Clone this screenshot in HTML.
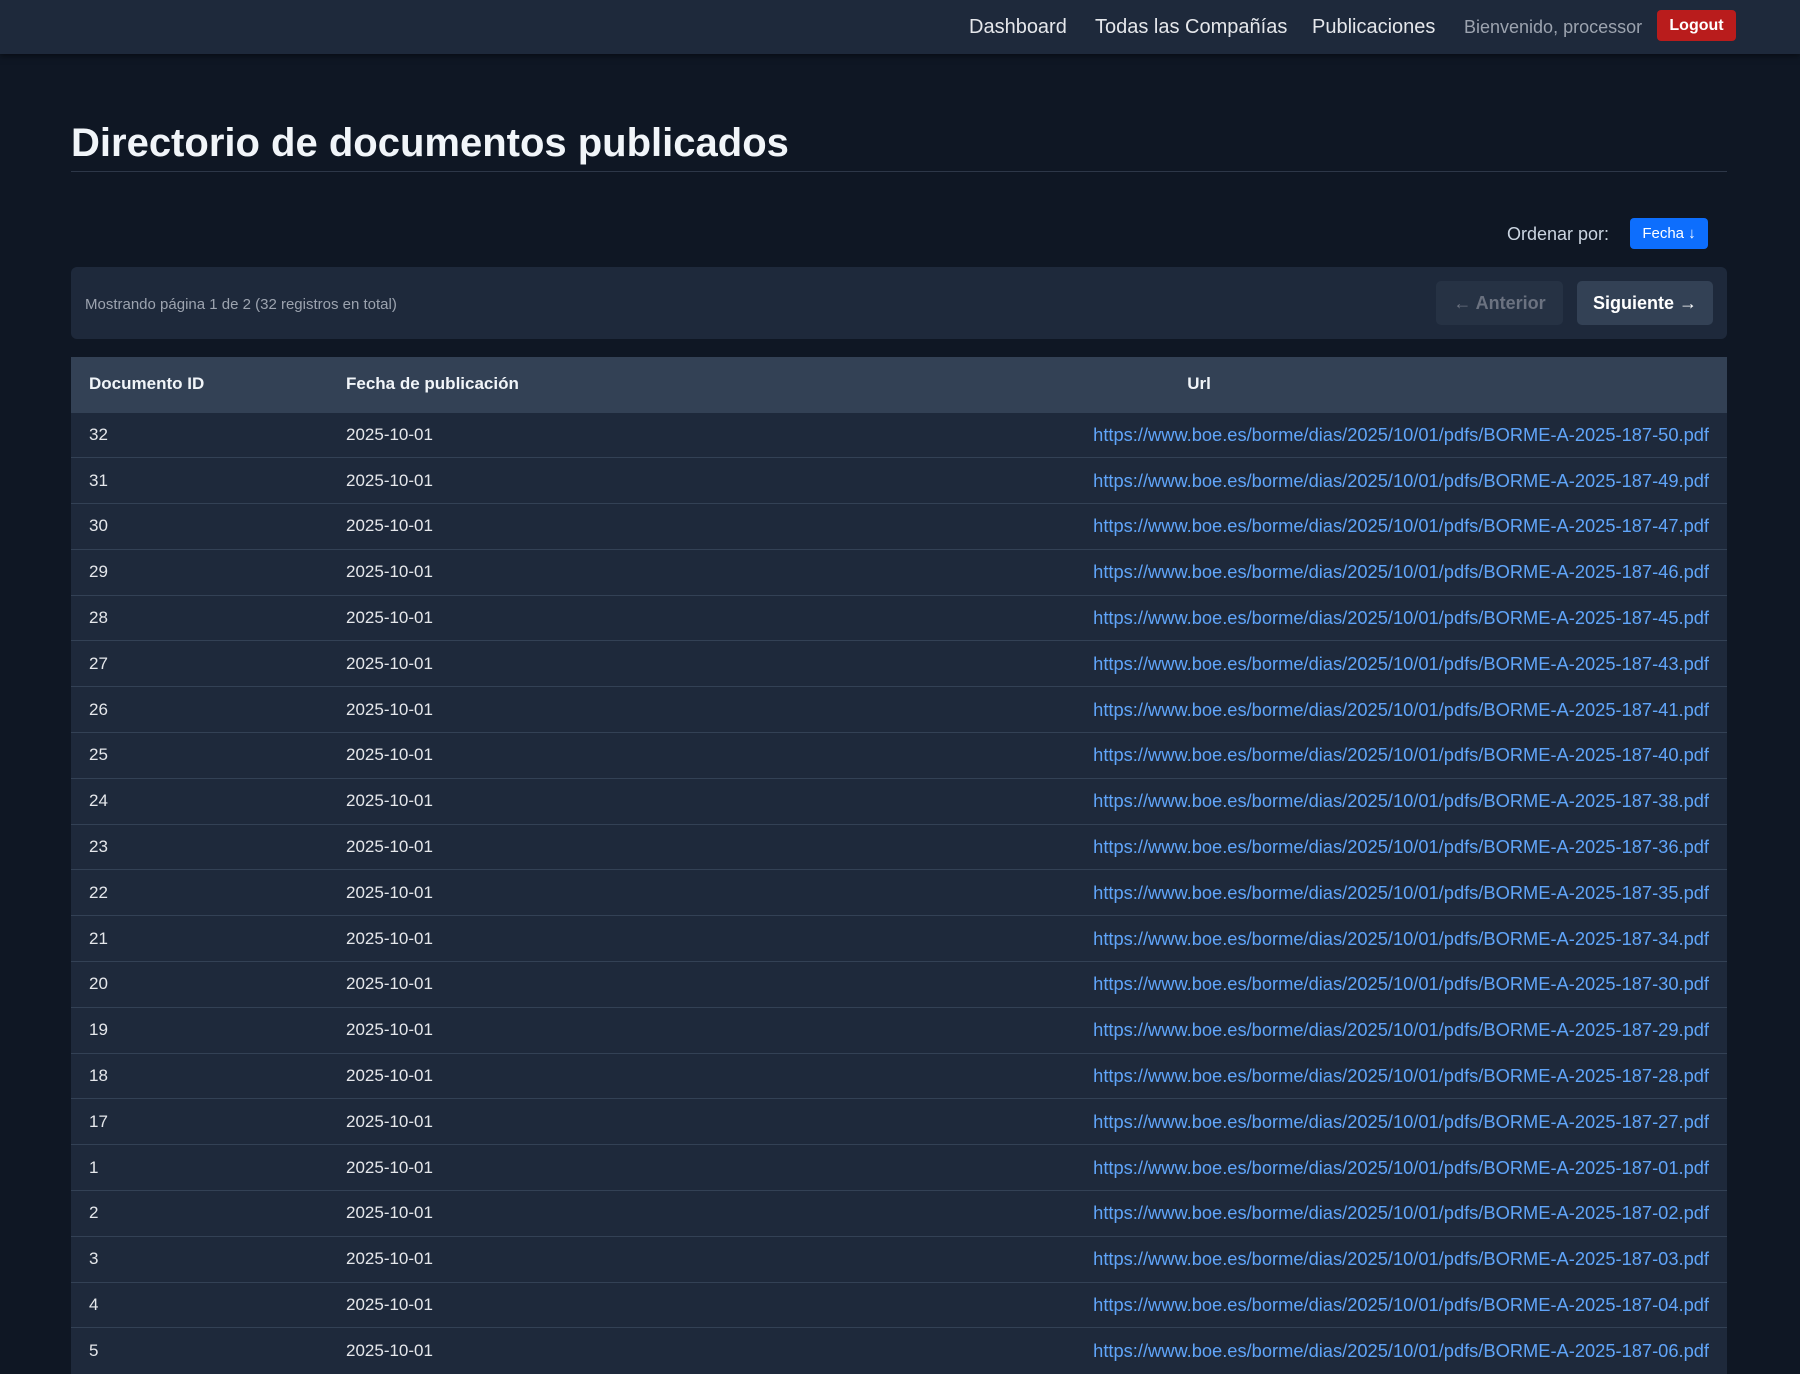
<!DOCTYPE html>
<html><head><meta charset="utf-8"><style>
*{box-sizing:border-box;margin:0;padding:0}
body{width:1800px;height:1350px;overflow:hidden;background:#0f1724;font-family:"Liberation Sans",sans-serif;color:#e5e7eb}
.nav{position:absolute;left:0;top:0;width:1800px;height:54px;background:#1e293b;box-shadow:0 2px 6px rgba(0,0,0,.5)}
.nav span{position:absolute;top:16px;font-size:20px;color:#e5e7eb}
.nav .w{color:#9ca3af;font-size:18px;top:17px}
.logout{position:absolute;left:1657px;top:10px;width:79px;height:31px;background:#b91c1c;border-radius:4px;color:#fff;font-weight:bold;font-size:16px;text-align:center;line-height:31px}
h1{position:absolute;left:71px;top:121px;font-size:40px;font-weight:bold;color:#f1f5f9}
.hr{position:absolute;left:71px;top:171px;width:1656px;height:1px;background:#2d3748}
.ord{position:absolute;left:1507px;top:224px;font-size:18px;color:#cbd5e1}
.fecha{position:absolute;left:1630px;top:218px;width:78px;height:31px;background:#0d6efd;border-radius:4px;color:#fff;font-size:15px;text-align:center;line-height:31px}
.pag{position:absolute;left:71px;top:267px;width:1656px;height:72px;background:#1e293b;border-radius:6px}
.pag .t{position:absolute;left:14px;top:29px;font-size:15px;color:#9ca3af}
.btn{position:absolute;top:14px;height:44px;border-radius:5px;font-weight:bold;font-size:18px;text-align:center;line-height:44px}
.ant{left:1365px;width:127px;background:#263244;color:#6b7280}
.sig{left:1506px;width:136px;background:#334155;color:#fff}
table{position:absolute;left:71px;top:357px;width:1656px;border-collapse:collapse;font-size:17px}
th{background:#334155;height:55px;text-align:left;font-weight:bold;color:#f1f5f9;padding:0 18px}
td{background:#1e293b;height:45.8px;padding:0 18px;border-top:1.5px solid #334155;color:#e5e7eb}
td.u{text-align:right;color:#60a5fa;font-size:18.3px}
th.u{text-align:center}
</style></head><body>
<div class="nav">
<span style="left:969px">Dashboard</span>
<span style="left:1095px">Todas las Compañías</span>
<span style="left:1312px">Publicaciones</span>
<span class="w" style="left:1464px">Bienvenido, processor</span>
<div class="logout">Logout</div>
</div>
<h1>Directorio de documentos publicados</h1>
<div class="hr"></div>
<div class="ord">Ordenar por:</div>
<div class="fecha">Fecha ↓</div>
<div class="pag"><div class="t">Mostrando página 1 de 2 (32 registros en total)</div>
<div class="btn ant">← Anterior</div><div class="btn sig">Siguiente →</div></div>
<table>
<tr><th style="width:257px">Documento ID</th><th style="width:343px">Fecha de publicación</th><th class="u">Url</th></tr>
<tr><td>32</td><td>2025-10-01</td><td class="u">https://www.boe.es/borme/dias/2025/10/01/pdfs/BORME-A-2025-187-50.pdf</td></tr>
<tr><td>31</td><td>2025-10-01</td><td class="u">https://www.boe.es/borme/dias/2025/10/01/pdfs/BORME-A-2025-187-49.pdf</td></tr>
<tr><td>30</td><td>2025-10-01</td><td class="u">https://www.boe.es/borme/dias/2025/10/01/pdfs/BORME-A-2025-187-47.pdf</td></tr>
<tr><td>29</td><td>2025-10-01</td><td class="u">https://www.boe.es/borme/dias/2025/10/01/pdfs/BORME-A-2025-187-46.pdf</td></tr>
<tr><td>28</td><td>2025-10-01</td><td class="u">https://www.boe.es/borme/dias/2025/10/01/pdfs/BORME-A-2025-187-45.pdf</td></tr>
<tr><td>27</td><td>2025-10-01</td><td class="u">https://www.boe.es/borme/dias/2025/10/01/pdfs/BORME-A-2025-187-43.pdf</td></tr>
<tr><td>26</td><td>2025-10-01</td><td class="u">https://www.boe.es/borme/dias/2025/10/01/pdfs/BORME-A-2025-187-41.pdf</td></tr>
<tr><td>25</td><td>2025-10-01</td><td class="u">https://www.boe.es/borme/dias/2025/10/01/pdfs/BORME-A-2025-187-40.pdf</td></tr>
<tr><td>24</td><td>2025-10-01</td><td class="u">https://www.boe.es/borme/dias/2025/10/01/pdfs/BORME-A-2025-187-38.pdf</td></tr>
<tr><td>23</td><td>2025-10-01</td><td class="u">https://www.boe.es/borme/dias/2025/10/01/pdfs/BORME-A-2025-187-36.pdf</td></tr>
<tr><td>22</td><td>2025-10-01</td><td class="u">https://www.boe.es/borme/dias/2025/10/01/pdfs/BORME-A-2025-187-35.pdf</td></tr>
<tr><td>21</td><td>2025-10-01</td><td class="u">https://www.boe.es/borme/dias/2025/10/01/pdfs/BORME-A-2025-187-34.pdf</td></tr>
<tr><td>20</td><td>2025-10-01</td><td class="u">https://www.boe.es/borme/dias/2025/10/01/pdfs/BORME-A-2025-187-30.pdf</td></tr>
<tr><td>19</td><td>2025-10-01</td><td class="u">https://www.boe.es/borme/dias/2025/10/01/pdfs/BORME-A-2025-187-29.pdf</td></tr>
<tr><td>18</td><td>2025-10-01</td><td class="u">https://www.boe.es/borme/dias/2025/10/01/pdfs/BORME-A-2025-187-28.pdf</td></tr>
<tr><td>17</td><td>2025-10-01</td><td class="u">https://www.boe.es/borme/dias/2025/10/01/pdfs/BORME-A-2025-187-27.pdf</td></tr>
<tr><td>1</td><td>2025-10-01</td><td class="u">https://www.boe.es/borme/dias/2025/10/01/pdfs/BORME-A-2025-187-01.pdf</td></tr>
<tr><td>2</td><td>2025-10-01</td><td class="u">https://www.boe.es/borme/dias/2025/10/01/pdfs/BORME-A-2025-187-02.pdf</td></tr>
<tr><td>3</td><td>2025-10-01</td><td class="u">https://www.boe.es/borme/dias/2025/10/01/pdfs/BORME-A-2025-187-03.pdf</td></tr>
<tr><td>4</td><td>2025-10-01</td><td class="u">https://www.boe.es/borme/dias/2025/10/01/pdfs/BORME-A-2025-187-04.pdf</td></tr>
<tr><td>5</td><td>2025-10-01</td><td class="u">https://www.boe.es/borme/dias/2025/10/01/pdfs/BORME-A-2025-187-06.pdf</td></tr>
</table>
</body></html>
